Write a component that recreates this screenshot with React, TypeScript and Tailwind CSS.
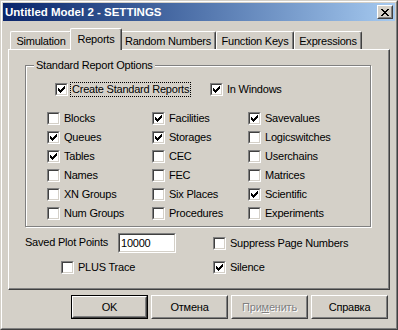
const rows: [string, boolean][] = [
  ['Blocks', false], ['Facilities', true], ['Savevalues', true],
  ['Queues', true], ['Storages', true], ['Logicswitches', false],
  ['Tables', true], ['CEC', false], ['Userchains', false],
  ['Names', false], ['FEC', false], ['Matrices', false],
  ['XN Groups', false], ['Six Places', false], ['Scientific', true],
  ['Num Groups', false], ['Procedures', false], ['Experiments', false],
];

const tabs = ['Simulation', 'Reports', 'Random Numbers', 'Function Keys', 'Expressions'];
const tabWidths = ['w-[62px]', 'w-[52px]', 'w-[96px]', 'w-[78px]', 'w-[68px]'];

function Check() {
  return (
    <svg width="7" height="7" viewBox="0 0 7 7" shapeRendering="crispEdges" className="block ml-px mt-px">
      <rect x="6" y="0" width="1" height="1" />
      <rect x="5" y="1" width="2" height="1" />
      <rect x="0" y="2" width="1" height="1" />
      <rect x="4" y="2" width="3" height="1" />
      <rect x="0" y="3" width="2" height="1" />
      <rect x="3" y="3" width="3" height="1" />
      <rect x="0" y="4" width="5" height="1" />
      <rect x="1" y="5" width="3" height="1" />
      <rect x="2" y="6" width="1" height="1" />
    </svg>
  );
}

function Box({ checked }: { checked?: boolean }) {
  return (
    <div className="w-[13px] h-[13px] shrink-0 border border-t-[#808080] border-l-[#808080] border-r-white border-b-white">
      <div className="w-full h-full border border-t-[#404040] border-l-[#404040] border-r-[#d4d0c8] border-b-[#d4d0c8] bg-white">
        {checked && <Check />}
      </div>
    </div>
  );
}

function Option({ label, checked }: { label: string; checked?: boolean }) {
  return (
    <div className="flex items-center h-[19px]">
      <Box checked={checked} />
      <span className="ml-[4px] whitespace-nowrap">{label}</span>
    </div>
  );
}

function Btn({ label, isDefault, disabled }: { label: React.ReactNode; isDefault?: boolean; disabled?: boolean }) {
  return (
    <div className={`w-[77px] h-[24px] ${isDefault ? 'border border-black' : ''}`}>
      <div className="w-full h-full border border-t-white border-l-white border-r-[#404040] border-b-[#404040]">
        <div className="w-full h-full border border-t-[#d4d0c8] border-l-[#d4d0c8] border-r-[#808080] border-b-[#808080] flex items-center justify-center">
          <span className={disabled ? 'text-[#808080] [text-shadow:1px_1px_0_#fff]' : ''}>{label}</span>
        </div>
      </div>
    </div>
  );
}

export default function App() {
  return (
    <div className="w-[398px] h-[330px] bg-[#d4d0c8] text-black text-[11px] leading-[13px] tracking-[-0.22px] font-['Liberation_Sans',Arial,sans-serif] border border-t-[#d4d0c8] border-l-[#d4d0c8] border-r-[#404040] border-b-[#404040]">
      <div className="h-full border border-t-white border-l-white border-r-[#808080] border-b-[#808080] p-px">
        {/* title bar */}
        <div className="h-[18px] flex items-center justify-between pl-[2px] pr-[2px] bg-gradient-to-r from-[#0a246a] to-[#a6caf0]">
          <span className="text-white font-bold text-[11.5px] tracking-normal">Untitled Model 2 - SETTINGS</span>
          <div className="w-[16px] h-[14px] border border-t-white border-l-white border-r-[#404040] border-b-[#404040] bg-[#d4d0c8]">
            <div className="w-full h-full border border-t-[#d4d0c8] border-l-[#d4d0c8] border-r-[#808080] border-b-[#808080] flex items-center justify-center">
              <svg width="8" height="7" viewBox="0 0 8 7" shapeRendering="crispEdges" className="block">
                <rect x="0" y="0" width="2" height="1" />
                <rect x="6" y="0" width="2" height="1" />
                <rect x="1" y="1" width="2" height="1" />
                <rect x="5" y="1" width="2" height="1" />
                <rect x="2" y="2" width="4" height="1" />
                <rect x="3" y="3" width="2" height="1" />
                <rect x="2" y="4" width="4" height="1" />
                <rect x="1" y="5" width="2" height="1" />
                <rect x="5" y="5" width="2" height="1" />
                <rect x="0" y="6" width="2" height="1" />
                <rect x="6" y="6" width="2" height="1" />
              </svg>
            </div>
          </div>
        </div>

        <div className="px-[5px] pt-[7px]">
          {/* tabs */}
          <div className="flex items-end h-[21px] pl-[2px]">
            {tabs.map((t, i) =>
              i === 1 ? (
                <div key={t} className={`${tabWidths[i]} -mx-[2px] h-[22px] -mb-px relative z-10 bg-[#d4d0c8] border-t border-l border-r border-t-white border-l-white border-r-[#404040] rounded-t-[2px] shadow-[inset_-1px_0_#808080] pt-[4px] text-center`}>
                  {t}
                </div>
              ) : (
                <div key={t} className={`${tabWidths[i]} h-[18px] border-t border-l border-r border-t-white border-l-white border-r-[#404040] rounded-t-[2px] shadow-[inset_-1px_0_#808080] pt-[3px] text-center whitespace-nowrap`}>
                  {t}
                </div>
              )
            )}
          </div>

          {/* panel */}
          <div className="w-[382px] h-[241px] border border-t-white border-l-white border-r-[#404040] border-b-[#404040] shadow-[inset_-1px_-1px_#808080]">
            <div className="relative ml-[16px] mt-[15px] w-[346px] h-[162px] border border-[#808080] shadow-[inset_1px_1px_0_#fff,1px_1px_0_#fff]">
              <span className="absolute left-[8px] -top-[7px] px-[2px] bg-[#d4d0c8] whitespace-nowrap">Standard Report Options</span>

              <div className="flex items-center h-[19px] mt-[14px] pl-[29px]">
                <div className="w-[155px] flex items-center">
                  <Box checked />
                  <span className="ml-[2px] px-px border border-dotted border-black whitespace-nowrap">Create Standard Reports</span>
                </div>
                <Option label="In Windows" checked />
              </div>

              <div className="grid grid-cols-[105px_96px_1fr] mt-[10px] pl-[21px]">
                {rows.map(([label, checked]) => (
                  <Option key={label} label={label} checked={checked} />
                ))}
              </div>
            </div>

            <div className="grid grid-cols-[188px_1fr] pl-[16px] mt-[6px] items-center">
              <div className="flex items-center h-[20px]">
                <span className="w-[93px] whitespace-nowrap -mt-[2px]">Saved Plot Points</span>
                <div className="w-[58px] h-[20px] border border-t-[#808080] border-l-[#808080] border-r-white border-b-white">
                  <div className="w-full h-full border border-t-[#404040] border-l-[#404040] border-r-[#d4d0c8] border-b-[#d4d0c8] bg-white flex items-center pl-px">
                    10000
                  </div>
                </div>
              </div>
              <Option label="Suppress Page Numbers" />
              <div className="pl-[36px] mt-[5px]">
                <Option label="PLUS Trace" />
              </div>
              <div className="mt-[5px]">
                <Option label="Silence" checked />
              </div>
            </div>
          </div>

          {/* buttons */}
          <div className="flex gap-[3px] mt-[5px] ml-[63px]">
            <Btn label="OK" isDefault />
            <Btn label="Отмена" />
            <Btn label={<>При<u>м</u>енить</>} disabled />
            <Btn label="Справка" />
          </div>
        </div>
      </div>
    </div>
  );
}
